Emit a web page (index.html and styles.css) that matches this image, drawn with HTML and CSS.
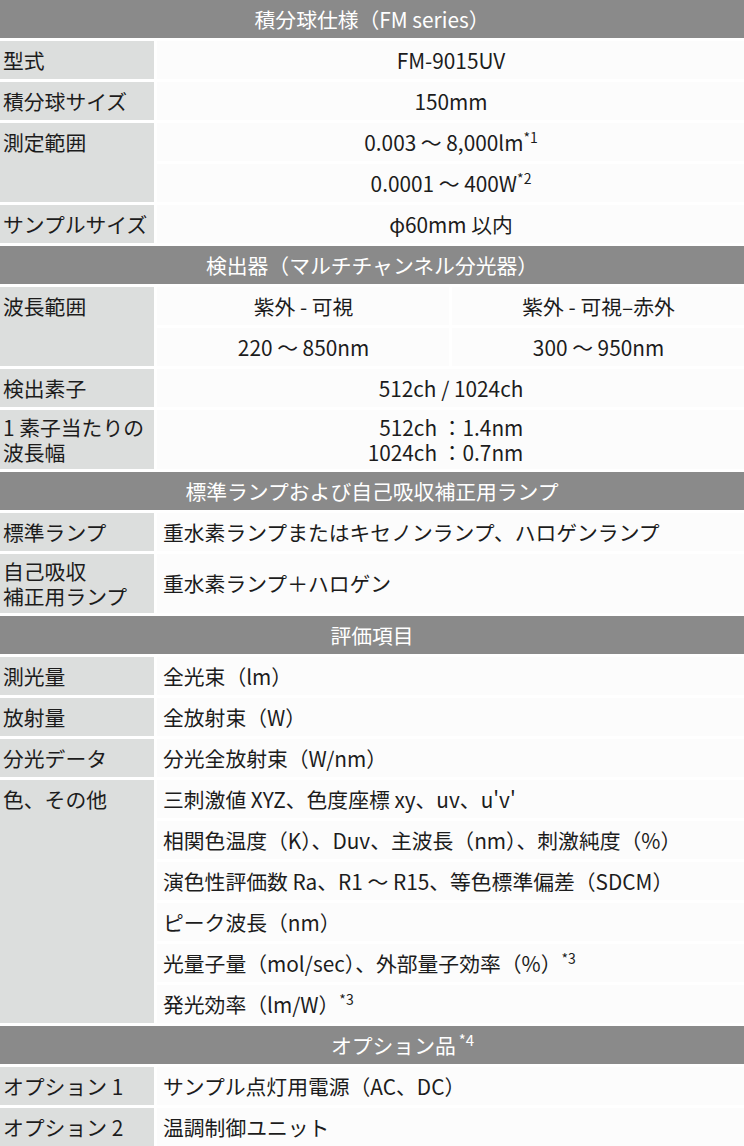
FILE: index.html
```html
<!DOCTYPE html>
<html lang="ja">
<head>
<meta charset="utf-8">
<title>積分球仕様</title>
<link rel="stylesheet" href="styles.css">
</head>
<body>
<table class="spec">
  <colgroup>
    <col class="col-label">
    <col class="col-val">
    <col class="col-val">
  </colgroup>
  <tbody>
    <tr class="head"><th colspan="3">積分球仕様（FM series）</th></tr>
    <tr><th class="lbl">型式</th><td colspan="2" class="val c">FM-9015UV</td></tr>
    <tr><th class="lbl">積分球サイズ</th><td colspan="2" class="val c">150mm</td></tr>
    <tr><th class="lbl top" rowspan="2">測定範囲</th><td colspan="2" class="val c">0.003 〜 8,000lm<sup>*1</sup></td></tr>
    <tr><td colspan="2" class="val c">0.0001 〜 400W<sup>*2</sup></td></tr>
    <tr><th class="lbl">サンプルサイズ</th><td colspan="2" class="val c">φ60mm 以内</td></tr>

    <tr class="head"><th colspan="3">検出器（マルチチャンネル分光器）</th></tr>
    <tr><th class="lbl top" rowspan="2">波長範囲</th><td class="val c">紫外 - 可視</td><td class="val c">紫外 - 可視–赤外</td></tr>
    <tr><td class="val c">220 〜 850nm</td><td class="val c">300 〜 950nm</td></tr>
    <tr><th class="lbl">検出素子</th><td colspan="2" class="val c">512ch / 1024ch</td></tr>
    <tr><th class="lbl two">1 素子当たりの<br>波長幅</th><td colspan="2" class="val c two pair-cell"><span class="pair">512ch ：1.4nm<br>1024ch ：0.7nm</span></td></tr>

    <tr class="head"><th colspan="3">標準ランプおよび自己吸収補正用ランプ</th></tr>
    <tr><th class="lbl">標準ランプ</th><td colspan="2" class="val">重水素ランプまたはキセノンランプ、ハロゲンランプ</td></tr>
    <tr><th class="lbl two">自己吸収<br>補正用ランプ</th><td colspan="2" class="val">重水素ランプ＋ハロゲン</td></tr>

    <tr class="head"><th colspan="3">評価項目</th></tr>
    <tr><th class="lbl">測光量</th><td colspan="2" class="val">全光束（lm）</td></tr>
    <tr><th class="lbl">放射量</th><td colspan="2" class="val">全放射束（W）</td></tr>
    <tr><th class="lbl">分光データ</th><td colspan="2" class="val">分光全放射束（W/nm）</td></tr>
    <tr><th class="lbl top" rowspan="6">色、その他</th><td colspan="2" class="val">三刺激値 XYZ、色度座標 xy、uv、u'v'</td></tr>
    <tr><td colspan="2" class="val">相関色温度（K）、Duv、主波長（nm）、刺激純度（%）</td></tr>
    <tr><td colspan="2" class="val">演色性評価数 Ra、R1 〜 R15、等色標準偏差（SDCM）</td></tr>
    <tr><td colspan="2" class="val">ピーク波長（nm）</td></tr>
    <tr><td colspan="2" class="val">光量子量（mol/sec）、外部量子効率（%）<sup>*3</sup></td></tr>
    <tr><td colspan="2" class="val">発光効率（lm/W）<sup>*3</sup></td></tr>

    <tr class="head"><th colspan="3" class="head-opt">オプション品<sup class="hsup">*4</sup></th></tr>
    <tr><th class="lbl">オプション 1</th><td colspan="2" class="val">サンプル点灯用電源（AC、DC）</td></tr>
    <tr><th class="lbl">オプション 2</th><td colspan="2" class="val">温調制御ユニット</td></tr>
  </tbody>
</table>
</body>
</html>
```
FILE: styles.css
```css
html, body {
  margin: 0;
  padding: 0;
  background: #ffffff;
}

body {
  font-family: "Noto Sans CJK JP", "Noto Sans", sans-serif;
  font-size: 20.8px;
  color: #1c1c1c;
  overflow: hidden;
}

.spec {
  border-collapse: separate;
  border-spacing: 3px;
  margin: -3px;
  width: 750px;
  table-layout: fixed;
}

.col-label { width: 154px; }
.col-val { width: 292px; }

.spec th,
.spec td {
  height: 38px;
  padding: 0 5px;
  line-height: 25px;
  box-sizing: border-box;
  font-weight: normal;
  text-align: left;
  vertical-align: middle;
  white-space: nowrap;
}

.spec .two {
  padding-top: 5px;
  padding-bottom: 4px;
}

.head th {
  background: #8a8a8a;
  color: #ffffff;
  text-align: center;
}

.spec .head-opt {
  padding-left: 66px;
}

.spec .lbl {
  background: #dcdedd;
  padding-left: 3px;
  padding-right: 0;
}

.spec .lbl.top {
  vertical-align: top;
  padding-top: 6.5px;
}

.val {
  background: #fcfcfc;
}

.spec .val {
  padding-left: 6px;
}

.val.c {
  text-align: center;
}

.spec .pair-cell {
  padding-right: 16px;
}

.pair {
  display: inline-block;
  text-align: right;
}

sup {
  font-size: 14px;
  line-height: 0;
  vertical-align: 8px;
}

.hsup {
  font-size: 15px;
  margin-left: 3px;
}
```
